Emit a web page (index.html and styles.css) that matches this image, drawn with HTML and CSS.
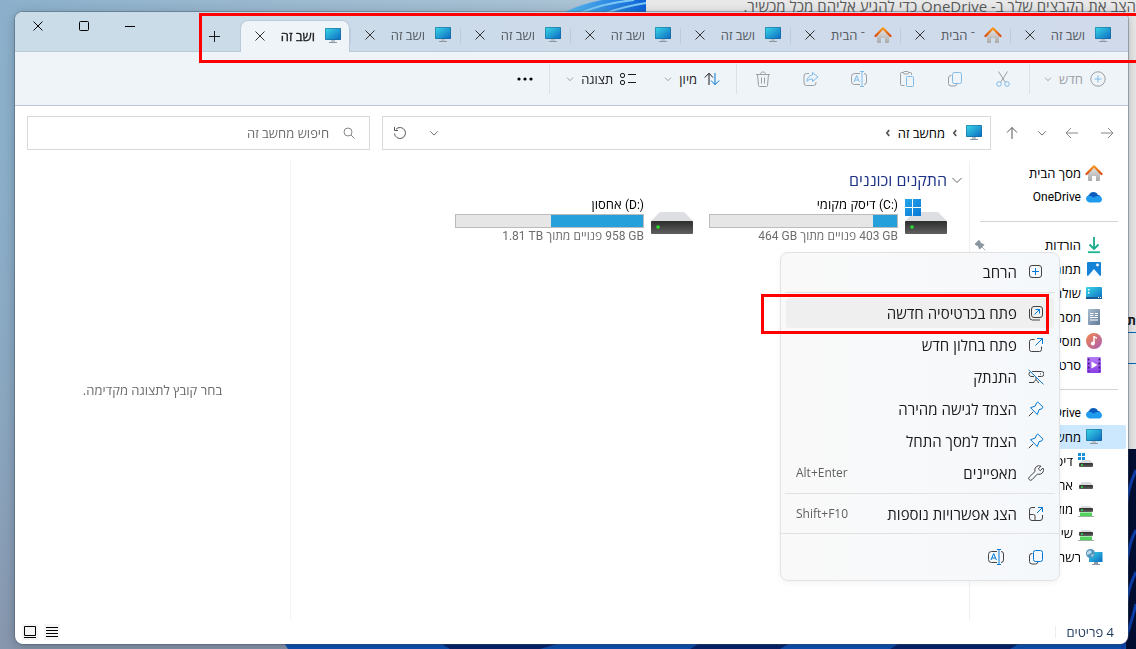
FILE: index.html
```html
<!DOCTYPE html>
<html lang="he" dir="rtl">
<head>
    <meta charset="UTF-8">
    <meta name="viewport" content="width=device-width, initial-scale=1.0">
    <title>מחשב זה</title>
    <link rel="stylesheet" href="styles.css">
</head>
<body>
    <!-- Icon sprite -->
    <svg class="sprite" aria-hidden="true">
        <defs>
            <linearGradient id="screen" x1="0" y1="0" x2="1" y2="1"><stop offset="0" stop-color="#3ad6e4"/><stop offset="1" stop-color="#0b6cc4"/></linearGradient>
            <linearGradient id="roof" x1="0" y1="0" x2="0" y2="1"><stop offset="0" stop-color="#f79a1c"/><stop offset="1" stop-color="#d9480f"/></linearGradient>
            <linearGradient id="wall" x1="0" y1="0" x2="0" y2="1"><stop offset="0" stop-color="#e4e4e4"/><stop offset="1" stop-color="#a9a9a9"/></linearGradient>
            <linearGradient id="disk" x1="0" y1="0" x2="0" y2="1"><stop offset="0" stop-color="#2e2e2e"/><stop offset="1" stop-color="#606060"/></linearGradient>
            <linearGradient id="flag" x1="0" y1="0" x2="1" y2="1"><stop offset="0" stop-color="#22a7ea"/><stop offset="1" stop-color="#0b78d6"/></linearGradient>
            <linearGradient id="tune" x1="0" y1="0" x2="1" y2="1"><stop offset="0" stop-color="#f5874a"/><stop offset="1" stop-color="#a85bb5"/></linearGradient>
            <linearGradient id="page" x1="0" y1="0" x2="1" y2="1"><stop offset="0" stop-color="#a9bdd0"/><stop offset="1" stop-color="#5f7a99"/></linearGradient>
            <linearGradient id="film" x1="0" y1="0" x2="0" y2="1"><stop offset="0" stop-color="#b57bf5"/><stop offset="1" stop-color="#8a3de6"/></linearGradient>
        </defs>
        <symbol id="i-pc" viewBox="0 0 18 18"><path d="M7 13h4v2H7z" fill="#b8c0c8"/><path d="M5 15h8v1H5z" fill="#8c97a3"/><rect x="1" y="1" width="16" height="12" rx="1" fill="#1b5f8f"/><rect x="1.500" y="1.500" width="15" height="11" fill="url(#screen)"/></symbol>
        <symbol id="i-home" viewBox="0 0 18 18"><path d="M3 8.500 9 3l6 5.500V16a1 1 0 0 1-1 1h-3v-5H7v5H4a1 1 0 0 1-1-1z" fill="url(#wall)"/><path d="M1.500 10 9 2.300 16.500 10" fill="none" stroke="url(#roof)" stroke-width="2.200" stroke-linejoin="round" stroke-linecap="round"/></symbol>
        <symbol id="i-cloud" viewBox="0 0 18 18"><path d="M4.500 14a3.700 3.700 0 0 1-.6-7A5 5 0 0 1 13 7a3.600 3.600 0 0 1 .5 7z" fill="#0a5cbd"/><path d="M4.500 14.500a3.800 3.800 0 0 1-3-5.500c2-2.500 5-1 7 .5 2-1.300 5-2.500 7.500-.5a3.300 3.300 0 0 1-1.500 5.500z" fill="#1f9cf0"/></symbol>
        <symbol id="i-down" viewBox="0 0 18 18"><path d="M9 1v12M4.500 8.500 9 13l4.500-4.500" fill="none" stroke="#18a98a" stroke-width="1.800"/><path d="M3 16.200h12" stroke="#18b48c" stroke-width="1.800"/></symbol>
        <symbol id="i-pics" viewBox="0 0 18 18"><rect x="2" y="2" width="14" height="14" rx="1" fill="#1583d8"/><path d="M3 16 9 9l6 7z" fill="#f4faff"/><circle cx="12.500" cy="5" r="1.400" fill="#fff"/></symbol>
        <symbol id="i-desk" viewBox="0 0 18 18"><rect x="1" y="3" width="16" height="12" rx="1" fill="url(#screen)"/><path d="M3 5h1.500v1.500H3zM3 8h1.500v1.500H3z" fill="#fff"/><path d="M1 13h16v2H1z" fill="#1a5b93"/><path d="M13 13.500h1M15 13.500h1" stroke="#fff"/></symbol>
        <symbol id="i-docs" viewBox="0 0 18 18"><rect x="3" y="1" width="12" height="16" rx="1" fill="url(#page)"/><path d="M5 5.500h3.500M5 7.500h3.500M5 9.500h8M5 12h8M10 5.500h3M10 7.500h3" stroke="#fff" stroke-width="1.200"/></symbol>
        <symbol id="i-music" viewBox="0 0 18 18"><circle cx="9" cy="9" r="8" fill="url(#tune)"/><path d="M9 4v7" stroke="#fff" stroke-width="1.500"/><path d="M9 4l3 1.500V7L9 5.500z" fill="#fff"/><circle cx="7.800" cy="11.500" r="1.900" fill="#fff"/></symbol>
        <symbol id="i-video" viewBox="0 0 18 18"><rect x="2" y="1" width="14" height="16" rx="1" fill="url(#film)"/><path d="M3.700 2.500v13M14.300 2.500v13" stroke="#3d1a78" stroke-width="1.600" stroke-dasharray="2 2"/><path d="M6.500 5.500v7l6-3.500z" fill="#fff"/></symbol>
        <symbol id="i-disk" viewBox="0 0 18 18"><path d="M5 6h8l3 3H2z" fill="#d9dbdf"/><rect x="2" y="9" width="14" height="4" rx="1" fill="url(#disk)"/><path d="M4 11h2" stroke="#3be04a" stroke-width="1.500"/></symbol>
        <symbol id="i-sysdisk" viewBox="0 0 18 18"><path d="M5 8h8l3 3H2z" fill="#d9dbdf"/><rect x="2" y="11" width="14" height="4" rx="1" fill="url(#disk)"/><path d="M4 13h2" stroke="#3be04a" stroke-width="1.500"/><path d="M1 1h3v3H1zM5 1h3v3H5zM1 5h3v3H1zM5 5h3v3H5z" fill="#1b90dd"/></symbol>
        <symbol id="i-netdisk" viewBox="0 0 18 18"><path d="M5 6h8l3 3H2z" fill="#d9dbdf"/><rect x="2" y="8" width="14" height="4" rx="1" fill="url(#disk)"/><path d="M4 10h2" stroke="#3be04a" stroke-width="1.500"/><path d="M3 12.500h12V17H3z" fill="#4fd45c"/><path d="M1 16.500h16" stroke="#9fb0a2"/></symbol>
        <symbol id="i-net" viewBox="0 0 18 18"><path d="M9 14h4v2H9zM7 16h8v1H7z" fill="#8c97a3"/><rect x="4" y="4" width="13.500" height="10" fill="url(#screen)"/><circle cx="5.500" cy="5.500" r="4.500" fill="#4f93bd"/><path d="M2 4l3-2 2 2-2 2-3 1zM6 7l3-1-1 2-1 1z" fill="#bcd9e8"/></symbol>
        <symbol id="i-drive" viewBox="0 0 42 38"><path d="M9 15h24l9 9H0z" fill="#dcdee2"/><rect y="24" width="42" height="13" rx="1" fill="url(#disk)"/><circle cx="7" cy="30" r="1.800" fill="#28e028"/></symbol>
        <symbol id="i-sysdrive" viewBox="0 0 42 38"><path d="M9 15h24l9 9H0z" fill="#dcdee2"/><rect y="24" width="42" height="13" rx="1" fill="url(#disk)"/><circle cx="7" cy="30" r="1.800" fill="#28e028"/><path d="M-1 2h8v8h-8zM8 2h8v8H8zM-1 11h8v8h-8zM8 11h8v8H8z" fill="url(#flag)"/></symbol>
        <symbol id="i-x" viewBox="0 0 12 12"><path d="M1.500 1.500l9 9M10.500 1.500l-9 9"/></symbol>
        <symbol id="i-chev" viewBox="0 0 12 12"><path d="M1.500 4 6 8.500 10.500 4"/></symbol>
        <symbol id="i-open" viewBox="0 0 12 12"><path d="M7.500 2.500 4.500 6l3 3.500"/></symbol>
        <symbol id="i-copy" viewBox="0 0 16 16"><path d="M4.500 4.500H4A2.500 2.500 0 0 0 1.500 7v5.500A2.500 2.500 0 0 0 4 15h3.500A2.500 2.500 0 0 0 10 13"/><rect class="accent" x="5.500" y="1.500" width="9" height="11" rx="2"/></symbol>
        <symbol id="i-rename" viewBox="0 0 16 16"><path d="M9 2.500H3.500a3 3 0 0 0-3 3v5a3 3 0 0 0 3 3H9M13 2.500a2.500 2.500 0 0 1 2.500 2.500v6a2.500 2.500 0 0 1-2.500 2.500"/><path class="accent" d="M11 .5v15M9 .5h4M9 15.500h4M3 11l2.700-6.500L8.400 11M4 9h3.500"/></symbol>
        <symbol id="i-pinned" viewBox="0 0 16 16"><path d="M15 15l-4.500-4.500M6.500 1.500l-5 5 1 1.500 3 1 2 4.500 6-6-4.500-2-1.500-3z"/></symbol>
    </svg>

    <!-- Desktop wallpaper -->
    <svg class="wallpaper" viewBox="0 0 1136 649" preserveAspectRatio="none" aria-hidden="true">
        <defs>
            <linearGradient id="sky" x1="0" y1="0" x2="1" y2="0"><stop offset="0" stop-color="#8cb0cb"/><stop offset=".5" stop-color="#a9c2d4"/></linearGradient>
            <linearGradient id="dusk" x1="0" y1="0" x2="0" y2="1"><stop offset="0" stop-color="#8cb0cb" stop-opacity="0"/><stop offset="1" stop-color="#8796ad"/></linearGradient>
            <linearGradient id="bloom" x1="0" y1="0" x2="1" y2="0"><stop offset="0" stop-color="#5cc0f2"/><stop offset="1" stop-color="#0a5fd8"/></linearGradient>
        </defs>
        <rect width="1136" height="649" fill="url(#sky)"/>
        <rect width="1136" height="649" fill="url(#dusk)"/>
        <path d="M562 13Q584 3 602 0h46v13z" fill="url(#bloom)"/>
        <path d="M580 13Q604 3 634 0M606 13Q626 6 646 3" stroke="#7cc8f5" stroke-width="2" fill="none"/>
        <path d="M284 643h852v6H288z" fill="#0d52b5"/>
        <path d="M440 643h120l-20 6H450zM700 643h90l-10 6h-90zM900 643h120l-10 6H890z" fill="#06256e"/>
        <path d="M1126 440h10v209h-10z" fill="#020d33"/>
        <path d="M1136 470q-9 20-10 40M1136 530q-8 14-10 40M1136 572q-8 16-10 34M1136 604q-6 24-14 45" stroke="#0c3fae" stroke-width="3" fill="none"/>
    </svg>

    <!-- Window behind the explorer -->
    <div class="back-window">
        <p class="back-hint">הצב את הקבצים שלך ב- OneDrive כדי להגיע אליהם מכל מכשיר.</p>
        <p class="back-label">ת</p>
        <div class="back-field"></div>
    </div>

    <main class="window">
        <header class="tab-strip">
            <div class="tabs">
                <div class="tab"><svg class="icon"><use href="#i-pc"/></svg><span>ושב זה</span><button aria-label="סגור כרטיסיה"><svg class="line"><use href="#i-x"/></svg></button></div>
                <div class="tab"><svg class="icon"><use href="#i-home"/></svg><span>־ הבית</span><button aria-label="סגור כרטיסיה"><svg class="line"><use href="#i-x"/></svg></button></div>
                <div class="tab"><svg class="icon"><use href="#i-home"/></svg><span>־ הבית</span><button aria-label="סגור כרטיסיה"><svg class="line"><use href="#i-x"/></svg></button></div>
                <div class="tab"><svg class="icon"><use href="#i-pc"/></svg><span>ושב זה</span><button aria-label="סגור כרטיסיה"><svg class="line"><use href="#i-x"/></svg></button></div>
                <div class="tab"><svg class="icon"><use href="#i-pc"/></svg><span>ושב זה</span><button aria-label="סגור כרטיסיה"><svg class="line"><use href="#i-x"/></svg></button></div>
                <div class="tab"><svg class="icon"><use href="#i-pc"/></svg><span>ושב זה</span><button aria-label="סגור כרטיסיה"><svg class="line"><use href="#i-x"/></svg></button></div>
                <div class="tab"><svg class="icon"><use href="#i-pc"/></svg><span>ושב זה</span><button aria-label="סגור כרטיסיה"><svg class="line"><use href="#i-x"/></svg></button></div>
                <div class="tab active"><svg class="icon"><use href="#i-pc"/></svg><span>ושב זה</span><button aria-label="סגור כרטיסיה"><svg class="line"><use href="#i-x"/></svg></button></div>
            </div>
            <button class="new-tab" aria-label="כרטיסיה חדשה"><svg class="line" viewBox="0 0 12 12"><path d="M6.500 1v11M1 6.500h11"/></svg></button>
            <div class="window-controls">
                <button aria-label="מזער"><svg class="line" viewBox="0 0 12 12"><path d="M1 6.500h10"/></svg></button>
                <button aria-label="הגדל"><svg class="line" viewBox="0 0 12 12"><rect x="1.500" y="1.500" width="9" height="9" rx="1"/></svg></button>
                <button aria-label="סגור"><svg class="line"><use href="#i-x"/></svg></button>
            </div>
        </header>

        <div class="toolbar">
            <button class="cmd" disabled><svg class="line" viewBox="0 0 16 16"><circle cx="8" cy="8" r="7.200"/><path class="accent" d="M8 4.500v7M4.500 8h7"/></svg>חדש<svg class="line chev"><use href="#i-chev"/></svg></button>
            <i class="sep"></i>
            <div class="cmd-icons">
                <button disabled aria-label="גזור"><svg class="line" viewBox="0 0 16 16"><path d="M3.500.5l7 11M12.500.5l-7 11"/><g class="accent"><circle cx="4" cy="13" r="2.300"/><circle cx="12" cy="13" r="2.300"/></g></svg></button>
                <button disabled aria-label="העתק"><svg class="line"><use href="#i-copy"/></svg></button>
                <button disabled aria-label="הדבק"><svg class="line" viewBox="0 0 16 16"><path d="M5.500 14.500h-3a1 1 0 0 1-1-1v-11a1 1 0 0 1 1-1H4M10 1.500h1.500a1 1 0 0 1 1 1V4"/><rect x="4.500" y=".5" width="5" height="2.500" rx="1"/><rect class="accent" x="7.500" y="5.500" width="7" height="10" rx="1"/></svg></button>
                <button disabled aria-label="שנה שם"><svg class="line"><use href="#i-rename"/></svg></button>
                <button disabled aria-label="שתף"><svg class="line" viewBox="0 0 16 16"><path d="M6 2.500H3.500a2.500 2.500 0 0 0-2.500 2.500v7a2.500 2.500 0 0 0 2.500 2.500h7A2.500 2.500 0 0 0 13 12v-1"/><path class="accent" d="M9.500 1.500l5.500 4.500-5.500 4.500V8C6.500 8 5 9 4 10.500 4 7 6 4.500 9.500 4z"/></svg></button>
                <button disabled aria-label="מחק"><svg class="line" viewBox="0 0 16 16"><path d="M1 3.500h14M5.500 3.500C5.500 0 10.500 0 10.500 3.500M2.500 3.500l1 11a1 1 0 0 0 1 1h7a1 1 0 0 0 1-1l1-11M6.500 6.500v6M9.500 6.500v6"/></svg></button>
            </div>
            <i class="sep"></i>
            <button class="cmd"><svg class="line" viewBox="0 0 16 16"><path d="M5 14V2.500M.8 6.500 5 2.200l4 4.300"/><path class="accent" d="M11 2v11.500M7 9.500l4 4.200 4.200-4.200"/></svg>מיון<svg class="line chev"><use href="#i-chev"/></svg></button>
            <button class="cmd"><svg class="line" viewBox="0 0 16 16"><rect x=".5" y="2.500" width="4" height="4" rx="1.500"/><rect x=".5" y="9.500" width="4" height="4" rx="1.500"/><path d="M8 3.500h8M8 11.500h8"/></svg>תצוגה<svg class="line chev"><use href="#i-chev"/></svg></button>
            <i class="sep"></i>
            <button class="cmd" aria-label="עוד"><svg class="dots" viewBox="0 0 16 16"><circle cx="2" cy="8" r="1.600"/><circle cx="8" cy="8" r="1.600"/><circle cx="14" cy="8" r="1.600"/></svg></button>
        </div>

        <div class="address-row">
            <nav class="history">
                <button class="dim" aria-label="הקודם"><svg class="line" viewBox="0 0 14 14"><path d="M1 7h12M8 2l5 5-5 5"/></svg></button>
                <button class="dim" aria-label="הבא"><svg class="line" viewBox="0 0 14 14"><path d="M13 7H1M6 2 1 7l5 5"/></svg></button>
                <button class="recent" aria-label="אחרונים"><svg class="line small"><use href="#i-chev"/></svg></button>
                <button aria-label="למעלה"><svg class="line" viewBox="0 0 14 14"><path d="M7 13V1.500M2 6.500l5-5 5 5"/></svg></button>
            </nav>
            <div class="address">
                <svg class="icon"><use href="#i-pc"/></svg>
                <svg class="line crumb"><use href="#i-open"/></svg>
                <a href="#">מחשב זה</a>
                <svg class="line crumb"><use href="#i-open"/></svg>
                <div class="address-tools">
                    <button aria-label="היסטוריה"><svg class="line small"><use href="#i-chev"/></svg></button>
                    <button aria-label="רענן"><svg class="line" viewBox="0 0 14 14"><path d="M3 3.200a5.500 5.500 0 1 1-1.500 4.300M1.500 1v3.500H5"/></svg></button>
                </div>
            </div>
            <label class="search">
                <svg class="line" viewBox="0 0 12 12"><circle cx="5" cy="5" r="4"/><path d="M8 8l3.500 3.500"/></svg>
                <input type="text" placeholder="חיפוש מחשב זה" aria-label="חיפוש">
            </label>
        </div>

        <div class="content">
            <nav class="sidebar">
                <a href="#"><svg class="icon"><use href="#i-home"/></svg>מסך הבית</a>
                <a href="#"><svg class="icon"><use href="#i-cloud"/></svg><span class="latin">OneDrive</span></a>
                <hr>
                <a href="#"><svg class="icon"><use href="#i-down"/></svg>הורדות<svg class="pinned"><use href="#i-pinned"/></svg></a>
                <a href="#"><svg class="icon"><use href="#i-pics"/></svg>תמונות</a>
                <a href="#"><svg class="icon"><use href="#i-desk"/></svg>שולחן</a>
                <a href="#"><svg class="icon"><use href="#i-docs"/></svg>מסמכים</a>
                <a href="#"><svg class="icon"><use href="#i-music"/></svg>מוסיקה</a>
                <a href="#"><svg class="icon"><use href="#i-video"/></svg>סרטונים</a>
                <hr>
                <a href="#"><svg class="icon"><use href="#i-cloud"/></svg><span class="latin">OneDrive</span></a>
                <a href="#" class="selected"><svg class="icon"><use href="#i-pc"/></svg>מחשב זה</a>
                <a href="#" class="child"><svg class="icon"><use href="#i-sysdisk"/></svg>דיסק</a>
                <a href="#" class="child"><svg class="icon"><use href="#i-disk"/></svg>אחסון</a>
                <a href="#" class="child"><svg class="icon"><use href="#i-netdisk"/></svg>מוזיקה</a>
                <a href="#" class="child"><svg class="icon"><use href="#i-netdisk"/></svg>שיתוף</a>
                <a href="#"><svg class="icon"><use href="#i-net"/></svg>רשת</a>
            </nav>

            <section class="files">
                <h2><svg class="line"><use href="#i-chev"/></svg>התקנים וכוננים</h2>
                <div class="drives">
                    <div class="drive">
                        <svg class="drive-icon"><use href="#i-sysdrive"/></svg>
                        <div class="drive-info">
                            <div class="drive-name"><bdi class="latin" dir="ltr">(C:)</bdi> דיסק מקומי</div>
                            <div class="bar"><div style="width: 13%"></div></div>
                            <div class="drive-space"><bdi class="latin">403 GB</bdi> פנויים מתוך <bdi class="latin">464 GB</bdi></div>
                        </div>
                    </div>
                    <div class="drive">
                        <svg class="drive-icon"><use href="#i-drive"/></svg>
                        <div class="drive-info">
                            <div class="drive-name"><bdi class="latin" dir="ltr">(D:)</bdi> אחסון</div>
                            <div class="bar"><div style="width: 49%"></div></div>
                            <div class="drive-space"><bdi class="latin">958 GB</bdi> פנויים מתוך <bdi class="latin">1.81 TB</bdi></div>
                        </div>
                    </div>
                </div>
            </section>

            <aside class="preview">בחר קובץ לתצוגה מקדימה.</aside>
        </div>

        <footer class="status">
            <span>4 פריטים</span>
            <div class="views">
                <button aria-label="פרטים"><svg class="line" viewBox="0 0 16 16"><path d="M2 3.500h12M2 6.500h12M2 9.500h12M2 12.500h12"/></svg></button>
                <button aria-label="סמלים גדולים"><svg class="line" viewBox="0 0 16 16"><path d="M2.500 2.500h11v9h-11zM2 13.500h12"/></svg></button>
            </div>
        </footer>

        <!-- Context menu -->
        <div class="menu" role="menu">
            <button role="menuitem"><svg class="line" viewBox="0 0 16 16"><rect x="1.500" y="1.500" width="12" height="12" rx="2.500"/><path class="accent" d="M7.500 4v7M4 7.500h7"/></svg>הרחב</button>
            <hr>
            <button role="menuitem" class="hover"><svg class="line" viewBox="0 0 16 16"><rect x="3.500" y="1.500" width="11" height="11" rx="2.500"/><path d="M1.500 4v8a3 3 0 0 0 3 3H12"/><path class="accent" d="M6.500 9.500l5-5M7.500 4.500h4v4"/></svg>פתח בכרטיסיה חדשה</button>
            <button role="menuitem"><svg class="line" viewBox="0 0 16 16"><path d="M6.500 2.500h-3a2 2 0 0 0-2 2v8a2 2 0 0 0 2 2h8a2 2 0 0 0 2-2v-3"/><path class="accent" d="M7.500 8.500l7-7M9 1.500h5.500V7"/></svg>פתח בחלון חדש</button>
            <button role="menuitem"><svg class="line" viewBox="0 0 16 16"><path d="M4 2.500h9.500a2 2 0 0 1 0 5H10M2 3a2.500 2.500 0 0 0 1 4.500h3M8 8v3M1 13.500h5c0-3 4-3 4 0h1M12 5h1"/><path class="accent" d="M.5.8l15 14.500"/></svg>התנתק</button>
            <button role="menuitem"><svg class="line" viewBox="0 0 16 16"><path d="M.8 15.200l4.400-4.400"/><path class="accent" d="M9.800 1l5.200 5.200-1 1.500-3 1-1.700 4.800L2.500 6.700l4.800-1.700 1.200-3z"/></svg>הצמד לגישה מהירה</button>
            <button role="menuitem"><svg class="line" viewBox="0 0 16 16"><path d="M.8 15.200l4.400-4.400"/><path class="accent" d="M9.800 1l5.200 5.200-1 1.500-3 1-1.700 4.800L2.500 6.700l4.800-1.700 1.200-3z"/></svg>הצמד למסך התחל</button>
            <button role="menuitem"><svg class="line" viewBox="0 0 16 16"><path d="M13 1.200A4.300 4.300 0 0 0 7 6.500L1.300 12a1.800 1.800 0 0 0 2.700 2.700L9.500 9a4.300 4.300 0 0 0 5.500-6L12.200 5.700 10.300 3.900z"/></svg>מאפיינים<kbd>Alt+Enter</kbd></button>
            <hr>
            <button role="menuitem"><svg class="line" viewBox="0 0 16 16"><path d="M7 1.500H4A2.500 2.500 0 0 0 1.500 4v8A2.500 2.500 0 0 0 4 14.500h8a2.500 2.500 0 0 0 2.500-2.500V9M1.500 8.500h4a1.500 1.500 0 0 1 1.500 1.500v4.500"/><path class="accent" d="M9 7l5.500-5.500M10 1.500h4.500V6"/></svg>הצג אפשרויות נוספות<kbd>Shift+F10</kbd></button>
            <div class="menu-quick">
                <button aria-label="העתק"><svg class="line"><use href="#i-copy"/></svg></button>
                <button aria-label="שנה שם"><svg class="line"><use href="#i-rename"/></svg></button>
            </div>
        </div>
    </main>

    <!-- Red highlights -->
    <div class="mark mark-tabs"></div>
    <div class="mark mark-item"></div>
</body>
</html>
```
FILE: styles.css
```css
* {
    box-sizing: border-box;
}

body {
    margin: 0;
    padding: 12px 8px 5px 15px;
    height: 100vh;
    display: flex;
    overflow: hidden;
    font-family: "Open Sans", "Noto Sans", sans-serif;
    font-size: 13px;
    line-height: 16px;
    color: #1b1b1b;
    background: #8cb0cb;
}

button {
    display: flex;
    align-items: center;
    justify-content: center;
    padding: 0;
    border: none;
    background: none;
    font: inherit;
    color: inherit;
}

a {
    color: inherit;
    text-decoration: none;
}

.latin {
    font-family: Roboto, sans-serif;
    font-size: 12px;
}

.sprite {
    position: absolute;
    width: 0;
    height: 0;
}

.icon {
    width: 18px;
    height: 18px;
    flex: none;
}

.line {
    width: 16px;
    height: 16px;
    flex: none;
    fill: none;
    stroke: currentColor;
    stroke-width: 1;
    --accent: #0078d4;
}

.accent {
    stroke: var(--accent);
}

/* Desktop */
.wallpaper {
    position: fixed;
    inset: 0;
    width: 100%;
    height: 100%;
}

.back-window {
    position: absolute;
    top: 0;
    left: 646px;
    right: 0;
    height: 449px;
    background: #e9e9e9;
}

.back-hint {
    margin: 0;
    font-size: 15px;
    line-height: 12px;
    color: #5a5a5a;
    white-space: nowrap;
}

.back-label {
    position: absolute;
    top: 312px;
    right: 0;
    margin: 0;
    font-weight: bold;
}

.back-field {
    position: absolute;
    top: 332px;
    right: 0;
    width: 20px;
    height: 32px;
    border: solid #0067b8;
    border-width: 1px 0;
}

/* Window */
.window {
    position: relative;
    flex: 1;
    display: flex;
    flex-direction: column;
    min-width: 0;
    background: #fff;
    border-radius: 8px;
    box-shadow: 0 0 0 1px rgba(60, 80, 100, 0.4), 0 2px 12px rgba(0, 0, 0, 0.25);
}

.tab-strip {
    display: flex;
    height: 40px;
    padding-right: 8px;
    border-bottom: 1px solid #b9cadb;
    border-radius: 8px 8px 0 0;
    background: linear-gradient(to left, #d0daeb, #cadce8);
}

.tabs {
    display: flex;
    padding-top: 8px;
    margin-bottom: -1px;
}

.tab {
    display: flex;
    align-items: center;
    width: 110px;
    padding: 0 8px 2px 14px;
    color: #555b62;
    background: linear-gradient(#bccbdc, #bccbdc) left center / 1px 16px no-repeat;
}

.tab span {
    flex: 1;
    margin-right: 9px;
}

.tab .line {
    width: 12px;
    height: 12px;
    color: #333;
}

.tab.active {
    padding: 0 7px 2px 13px;
    color: #1b1b1b;
    -webkit-text-stroke: 0.3px;
    background: #eff4f9;
    border: 1px solid #b9cadb;
    border-bottom: none;
    border-radius: 8px 8px 0 0;
}

.new-tab {
    width: 32px;
    margin: 8px 10px 0 0;
}

.new-tab .line,
.window-controls .line {
    width: 12px;
    height: 12px;
}

.window-controls {
    display: flex;
    height: 28px;
    margin-right: auto;
    color: #000;
}

.window-controls button {
    width: 46px;
}

/* Toolbar */
.toolbar {
    display: flex;
    align-items: center;
    height: 54px;
    padding-right: 8px;
    background: #eff4f9;
    border-bottom: 1px solid #bcc8d6;
}

.sep {
    width: 1px;
    height: 30px;
    margin: 0 2px;
    background: #dbe1e8;
}

.cmd {
    gap: 7px;
    padding: 0 14px;
}

.dots {
    width: 16px;
    height: 16px;
}

.chev {
    width: 8px;
    height: 8px;
    color: #777;
}

.cmd:disabled,
.cmd-icons {
    color: #9a9fa5;
}

.cmd:disabled {
    padding-left: 12px;
}

.cmd:disabled .line,
.cmd-icons .line {
    --accent: #7fbbea;
}

.cmd-icons {
    display: flex;
}

.cmd-icons button {
    width: 48px;
}

/* Address row */
.address-row {
    display: grid;
    grid-template-columns: auto 12fr 7fr;
    height: 54px;
    padding: 10px 4px 10px 12px;
}

.history {
    display: flex;
    margin-left: 3px;
    color: #555;
}

.history button {
    width: 35px;
}

.history .recent {
    width: 25px;
}

.history .dim {
    color: #888;
}

.history .line,
.address-tools .line {
    width: 14px;
    height: 14px;
}

.history .small,
.address-tools .small {
    width: 10px;
    height: 10px;
}

.address,
.search {
    display: flex;
    align-items: center;
    min-width: 0;
    border: 1px solid #d9d9d9;
}

.address {
    padding: 0 7px 0 10px;
}

.address a {
    color: #000;
}

.crumb {
    width: 10px;
    height: 10px;
    margin: 0 5px;
    stroke-width: 2;
    color: #555;
}

.address-tools {
    display: flex;
    gap: 22px;
    margin-right: auto;
    color: #555;
}

.search {
    gap: 14px;
    margin-right: 12px;
    padding: 0 14px;
    color: #888;
}

.search .line {
    width: 12px;
    height: 12px;
}

.search input {
    flex: 1;
    min-width: 0;
    padding: 0;
    border: none;
    outline: none;
    font: inherit;
}

.search input::placeholder {
    color: #6d6d6d;
}

/* Content */
.content {
    flex: 1;
    display: flex;
    min-height: 0;
}

.sidebar {
    width: 159px;
    margin: 1px 0 0;
    border-left: 1px solid #f0f0f0;
}

.sidebar a {
    display: flex;
    align-items: center;
    gap: 4px;
    height: 24px;
    margin-right: 2px;
    padding: 0 23px 0 4px;
    color: #000;
    border-radius: 2px;
}

.sidebar .child {
    padding-right: 31px;
}

.sidebar .selected {
    background: #cce8ff;
}

.sidebar hr {
    height: 1px;
    margin: 12px 10px 11px;
    border: none;
    background: #d4d4d4;
}

.pinned {
    width: 12px;
    height: 12px;
    margin-right: auto;
    fill: #8b959e;
    stroke: #8b959e;
}

.files {
    flex: 1;
    padding: 10px 22px 0 0;
}

.files h2 {
    display: flex;
    align-items: center;
    gap: 4px;
    margin: 0 -16px 7px 0;
    font-size: 16px;
    line-height: 20px;
    font-weight: normal;
    color: #1e3287;
}

.files h2 .line {
    width: 12px;
    height: 12px;
    color: #666;
}

.drives {
    display: flex;
    flex-wrap: wrap;
    gap: 16px;
}

.drive {
    display: flex;
    gap: 7px;
    width: 238px;
}

.drive-icon {
    width: 42px;
    height: 38px;
    flex: none;
    overflow: visible;
}

.drive-info {
    flex: 1;
    color: #000;
}

.drive-name,
.drive-space {
    height: 16px;
    line-height: 14px;
}

.bar {
    height: 14px;
    margin-top: 1px;
    border: 1px solid #bcbcbc;
    background: #e6e6e6;
}

.bar div {
    height: 100%;
    background: #26a0da;
}

.drive-space {
    padding-top: 1px;
    font-size: 12px;
    color: #6d6d6d;
}

.preview {
    display: flex;
    align-items: center;
    justify-content: center;
    width: 276px;
    border-right: 1px solid #f4f4f4;
    color: #6d6d6d;
}

/* Status bar */
.status {
    display: flex;
    align-items: center;
    height: 24px;
    padding: 0 14px 0 7px;
    color: #1e395b;
}

.status span {
    padding-left: 10px;
    border-left: 1px solid #eee;
    line-height: 12px;
}

.views {
    display: flex;
    gap: 6px;
    margin-right: auto;
    color: #000;
}

.views button {
    background: #f5f5f5;
}

/* Context menu */
.menu {
    position: absolute;
    top: 240px;
    right: 68px;
    width: 280px;
    padding-top: 3px;
    border: 1px solid #e2e2e2;
    border-radius: 8px;
    background: linear-gradient(to right, #f9f9f9, #f5f8fb);
    box-shadow: 0 2px 6px rgba(0, 0, 0, 0.05);
    font-size: 15px;
}

.menu > button {
    justify-content: flex-start;
    gap: 11px;
    width: 268px;
    height: 32px;
    margin: 0 5px;
    padding: 0 10px;
    border: solid transparent;
    border-width: 1px 0;
    border-radius: 4px;
    background-clip: padding-box;
}

.menu > .hover {
    background-color: #efefef;
}

.menu .line {
    color: #444;
}

.menu hr {
    height: 1px;
    margin: 4px;
    border: none;
    background: #e2e2e2;
}

.menu kbd {
    margin-right: auto;
    font-family: inherit;
    font-size: 12px;
    color: #5f5f5f;
    direction: ltr;
}

.menu-quick {
    display: flex;
    height: 47px;
    margin-top: 3px;
    padding-right: 3px;
    border-top: 1px solid #e2e2e2;
}

.menu-quick button {
    width: 40px;
}

/* Highlights */
.mark {
    position: absolute;
    border: 3px solid #f00;
}

.mark-tabs {
    top: 13px;
    left: 199px;
    right: 0;
    height: 50px;
    border-right: none;
}

.mark-item {
    top: 294px;
    right: 87px;
    width: 288px;
    height: 40px;
}
```
